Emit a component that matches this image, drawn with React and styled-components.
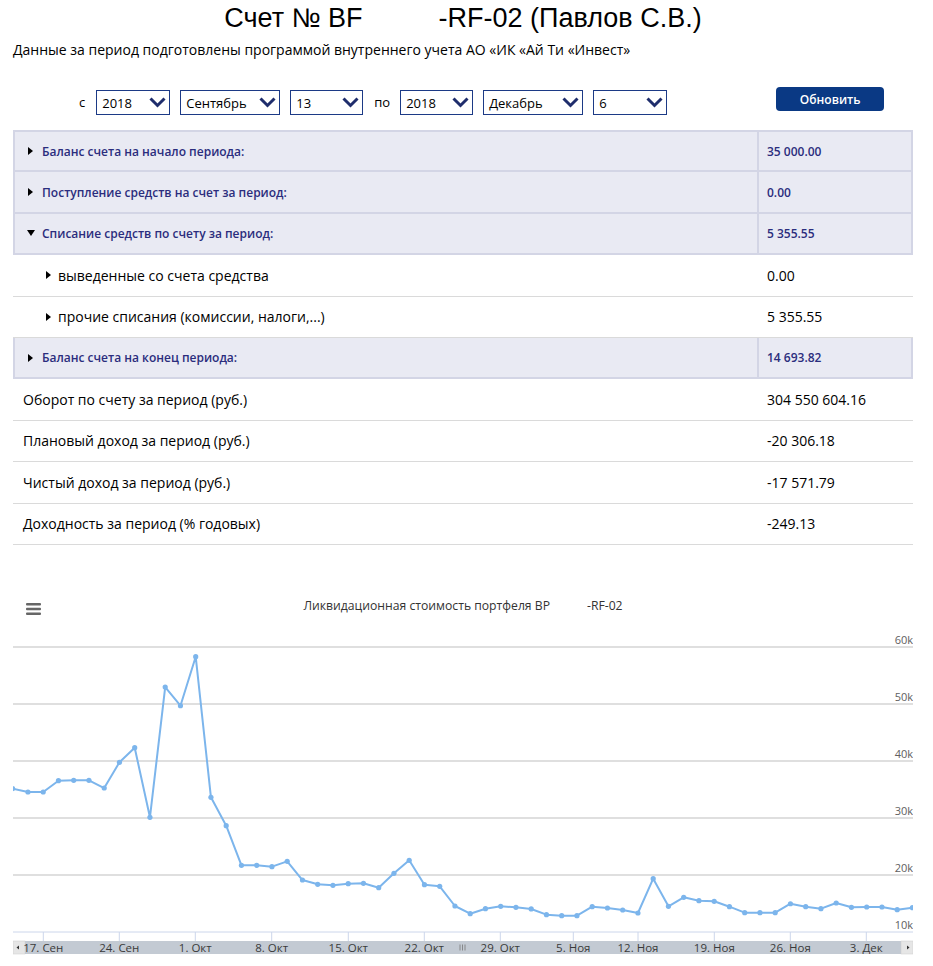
import styled, { createGlobalStyle } from "styled-components";

const GlobalStyle = createGlobalStyle`
  body {
    margin: 0;
    background: #fff;
    font-family: "Open Sans", "Noto Sans", sans-serif;
    color: #000;
  }
`;

const Page = styled.div`
  width: 900px;
  margin-left: 13px;
`;

const Title = styled.h1`
  margin: 0;
  padding-top: 3px;
  font-family: "Liberation Sans", Arial, sans-serif;
  font-size: 27px;
  font-weight: 400;
  line-height: 30px;
  text-align: center;
`;

const Gap = styled.span`
  display: inline-block;
  width: ${(p) => p.$w}px;
`;

const Subtitle = styled.p`
  margin: 8px 0 0;
  font-size: 14px;
  line-height: 18px;
`;

const Filters = styled.div`
  display: flex;
  align-items: flex-start;
  gap: 10px;
  margin-top: 31px;
  padding-left: 66px;
  height: 25px;
`;

const FilterLabel = styled.span`
  font-size: 13px;
  line-height: 25px;
  margin: ${(p) => p.$m || "0 1px 0 0"};
`;

const Select = styled.div`
  box-sizing: border-box;
  width: ${(p) => p.$w}px;
  height: 25px;
  border: 1px solid #1c3a86;
  display: flex;
  align-items: center;
  justify-content: space-between;
  padding: 0 3px 0 5px;
  font-size: 13px;
  background: #fff;
`;

const Button = styled.button`
  margin-left: 99px;
  margin-top: -3px;
  width: 108px;
  height: 24px;
  border: none;
  border-radius: 4px;
  background: #0a3984;
  color: #fff;
  font-family: "Open Sans", sans-serif;
  font-size: 12px;
  font-weight: 600;
  cursor: pointer;
`;

const Table = styled.div`
  margin-top: 15px;
`;

const Row = styled.div`
  box-sizing: border-box;
  display: grid;
  grid-template-columns: ${(p) => (p.$head ? "742px 1fr" : "744px 1fr")};
  height: ${(p) => (p.$first ? 42.4 : 41.4)}px;
  background: ${(p) => (p.$head ? "#e9eaf3" : "#fff")};
  border-bottom: ${(p) => (p.$head ? "2px solid #d3d5e5" : "1px solid #dadada")};
  border-top: ${(p) => (p.$first ? "2px solid #d3d5e5" : "none")};
  border-left: ${(p) => (p.$head ? "2px solid #d3d5e5" : "none")};
  border-right: ${(p) => (p.$head ? "2px solid #d3d5e5" : "none")};
  color: ${(p) => (p.$head ? "#2b2d7d" : "#000")};
  font-size: ${(p) => (p.$head ? "12px" : "14px")};
  font-weight: ${(p) => (p.$head ? 600 : 400)};
`;

const LabelCell = styled.div`
  display: flex;
  align-items: center;
  padding-left: ${(p) => p.$indent}px;
`;

const ValueCell = styled.div`
  display: flex;
  align-items: center;
  padding-left: ${(p) => (p.$head ? 8 : 10)}px;
  border-left: ${(p) => (p.$head ? "2px solid #d3d5e5" : "none")};
`;

const Arrow = styled.span`
  width: 0;
  height: 0;
  border-top: 4px solid transparent;
  border-bottom: 4px solid transparent;
  border-left: 5px solid #000;
  margin-right: ${(p) => p.$gap}px;
`;

const ArrowDown = styled.span`
  width: 0;
  height: 0;
  border-left: 4px solid transparent;
  border-right: 4px solid transparent;
  border-top: 6px solid #000;
  margin-right: 7px;
`;

const ChartBox = styled.div`
  margin-top: 52px;
`;

const ChartHeader = styled.div`
  display: grid;
  grid-template-columns: 60px 1fr 60px;
  align-items: center;
  height: 18px;
`;

const MenuButton = styled.div`
  margin-left: 13px;
  margin-top: 6px;
  display: flex;
`;

const ChartTitle = styled.div`
  text-align: center;
  font-size: 12.2px;
  color: #333;
`;

const Plot = styled.svg`
  display: block;
  margin-top: 16px;
  font-family: "Open Sans", sans-serif;
`;

const Chevron = () => (
  <svg width="17" height="11" viewBox="0 0 17 11">
    <path d="M1.5 1.5 L8.5 8.5 L15.5 1.5" fill="none" stroke="#1f2d6c" strokeWidth="3" />
  </svg>
);

const Hamburger = () => (
  <svg width="15" height="12" viewBox="0 0 15 12">
    <rect x="0" y="0" width="15" height="2.5" rx="1" fill="#666" />
    <rect x="0" y="4.7" width="15" height="2.5" rx="1" fill="#666" />
    <rect x="0" y="9.4" width="15" height="2.5" rx="1" fill="#666" />
  </svg>
);

const selects = [
  { w: 74, v: "2018" },
  { w: 100, v: "Сентябрь" },
  { w: 73, v: "13" },
  { label: "по" },
  { w: 73, v: "2018" },
  { w: 100, v: "Декабрь" },
  { w: 74, v: "6" },
];

const rows = [
  { kind: "head", label: "Баланс счета на начало периода:", value: "35 000.00" },
  { kind: "head", label: "Поступление средств на счет за период:", value: "0.00" },
  { kind: "open", label: "Списание средств по счету за период:", value: "5 355.55" },
  { kind: "sub", label: "выведенные со счета средства", value: "0.00" },
  { kind: "sub", label: "прочие списания (комиссии, налоги,...)", value: "5 355.55" },
  { kind: "head", label: "Баланс счета на конец периода:", value: "14 693.82" },
  { kind: "plain", label: "Оборот по счету за период (руб.)", value: "304 550 604.16" },
  { kind: "plain", label: "Плановый доход за период (руб.)", value: "-20 306.18" },
  { kind: "plain", label: "Чистый доход за период (руб.)", value: "-17 571.79" },
  { kind: "plain", label: "Доходность за период (% годовых)", value: "-249.13" },
];

// liquidation value, thousands of roubles, one point per trading day
const values = [
  35.14, 34.56, 34.56, 36.54, 36.61, 36.61, 35.26, 39.77, 42.33, 30.12,
  52.98, 49.7, 58.3, 33.63, 28.65, 21.7, 21.7, 21.46, 22.4, 19.12,
  18.37, 18.19, 18.47, 18.54, 17.77, 20.3, 22.58, 18.3, 18.02, 14.56,
  13.21, 14.09, 14.51, 14.33, 14.04, 13.04, 12.86, 12.86, 14.44, 14.21,
  13.86, 13.33, 19.35, 14.51, 16.09, 15.49, 15.39, 14.44, 13.39, 13.39,
  13.39, 14.96, 14.44, 14.09, 15.09, 14.33, 14.39, 14.39, 13.91, 14.26,
];

const ticks = [
  [30.3, "17. Сен"], [106.3, "24. Сен"], [182.3, "1. Окт"], [258.7, "8. Окт"],
  [335.3, "15. Окт"], [411.3, "22. Окт"], [487.3, "29. Окт"], [560.3, "5. Ноя"],
  [625, "12. Ноя"], [701.3, "19. Ноя"], [777.3, "26. Ноя"], [853.3, "3. Дек"],
];

const yOf = (v) => 301 - (v - 10) * 5.7;
const xOf = (i) => -0.3 + i * 15.25;

const Chart = () => {
  const pts = values.map((v, i) => [xOf(i), yOf(v)]);
  return (
    <Plot width="900" height="328" viewBox="0 0 900 328">
      {[60, 50, 40, 30, 20].map((g) => (
        <line key={g} x1="0" x2="900" y1={yOf(g)} y2={yOf(g)} stroke="#d4d4d4" strokeWidth="1.5" />
      ))}
      <line x1="0" x2="900" y1="301" y2="301" stroke="#ccd6eb" strokeWidth="1" />
      {[60, 50, 40, 30, 20, 10].map((g) => (
        <text key={g} x="900" y={yOf(g) - 3} textAnchor="end" fontSize="11" fill="#606060">
          {g}k
        </text>
      ))}
      <polyline
        points={pts.map((p) => p.join(",")).join(" ")}
        fill="none"
        stroke="#7cb5ec"
        strokeWidth="2"
        strokeLinejoin="round"
      />
      {pts.map(([x, y], i) => (
        <circle key={i} cx={x} cy={y} r="2.6" fill="#7cb5ec" />
      ))}
      {ticks.map(([x]) => (
        <line key={x} x1={x} x2={x} y1="301" y2="310" stroke="#ccd6eb" strokeWidth="1" />
      ))}
      <rect x="0" y="310" width="900" height="13" fill="#c3cad3" />
      <rect x="0" y="310" width="12" height="13" fill="#e6e6e6" stroke="#cccccc" strokeWidth="0.5" />
      <path d="M3.5 316.5 L6 314.5 L6 318.5 Z" fill="#333" />
      <rect x="888" y="310" width="12" height="13" fill="#e6e6e6" stroke="#cccccc" strokeWidth="0.5" />
      <path d="M896.5 316.5 L894 314.5 L894 318.5 Z" fill="#333" />
      {[447, 449.5, 452].map((x) => (
        <line key={x} x1={x} x2={x} y1="313.5" y2="319.5" stroke="#777" strokeWidth="0.8" />
      ))}
      {ticks.map(([x, t]) => (
        <text key={t} x={x} y="321" textAnchor="middle" fontSize="11.5" fill="#3a3a3a">
          {t}
        </text>
      ))}
    </Plot>
  );
};

const renderLabel = (r) => {
  if (r.kind === "head")
    return (
      <LabelCell $indent={13}>
        <Arrow $gap={9} />
        {r.label}
      </LabelCell>
    );
  if (r.kind === "open")
    return (
      <LabelCell $indent={12}>
        <ArrowDown />
        {r.label}
      </LabelCell>
    );
  if (r.kind === "sub")
    return (
      <LabelCell $indent={33}>
        <Arrow $gap={7} />
        {r.label}
      </LabelCell>
    );
  return <LabelCell $indent={10}>{r.label}</LabelCell>;
};

export default function App() {
  return (
    <Page>
      <GlobalStyle />
      <Title>
        Счет № BF<Gap $w={76} />-RF-02 (Павлов С.В.)
      </Title>
      <Subtitle>
        Данные за период подготовлены программой внутреннего учета АО «ИК «Ай Ти «Инвест»
      </Subtitle>

      <Filters>
        <FilterLabel>с</FilterLabel>
        {selects.map((s, i) =>
          s.label ? (
            <FilterLabel key={i} $m="0 0 0 1px">
              {s.label}
            </FilterLabel>
          ) : (
            <Select key={i} $w={s.w}>
              <span>{s.v}</span>
              <Chevron />
            </Select>
          )
        )}
        <Button>Обновить</Button>
      </Filters>

      <Table>
        {rows.map((r, i) => {
          const head = r.kind === "head" || r.kind === "open";
          return (
            <Row key={i} $head={head} $first={i === 0}>
              {renderLabel(r)}
              <ValueCell $head={head}>{r.value}</ValueCell>
            </Row>
          );
        })}
      </Table>

      <ChartBox>
        <ChartHeader>
          <MenuButton>
            <Hamburger />
          </MenuButton>
          <ChartTitle>
            Ликвидационная стоимость портфеля BP<Gap $w={37} />-RF-02
          </ChartTitle>
          <span />
        </ChartHeader>
        <Chart />
      </ChartBox>
    </Page>
  );
}
